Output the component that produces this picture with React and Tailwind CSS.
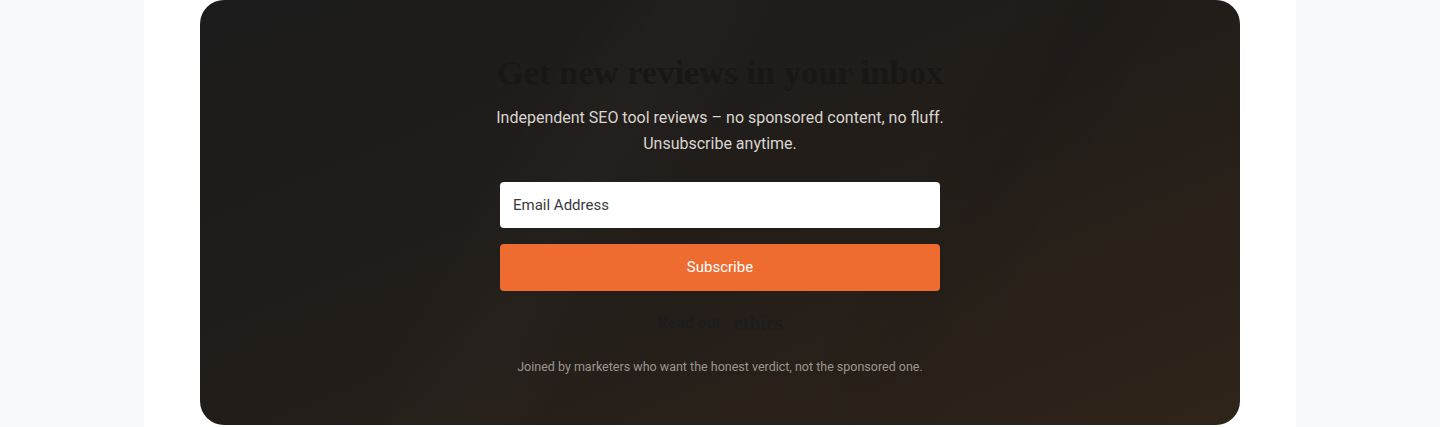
export default function App() {
  return (
    <div className="w-full h-[427px] bg-[#f8f9fb] flex justify-center overflow-hidden" style={{ fontFamily: "Roboto, 'Liberation Sans', sans-serif" }}>
      <div className="w-[1152px] h-full bg-white flex justify-center">
        <section className="relative w-[1040px] h-[425px] rounded-3xl overflow-hidden bg-gradient-to-br from-[#1b1b1b] via-[#221d19] to-[#2f2419]">
          {/* faint diagonal bands */}
          <div className="absolute inset-0 bg-[linear-gradient(120deg,transparent_30%,rgba(255,255,255,0.015)_38%,transparent_46%,transparent_62%,rgba(0,0,0,0.06)_70%,transparent_78%)]" />
          <div className="relative flex flex-col items-center pt-[50px]">
            <h2 className="text-[34.5px] leading-[44px] font-bold text-[#191715] font-['Liberation_Serif',serif]">
              Get new reviews in your inbox
            </h2>
            <p className="mt-[11px] text-[16px] leading-[26px] text-[#d9d5d0] text-center">
              Independent SEO tool reviews – no sponsored content, no fluff.
              <br />
              Unsubscribe anytime.
            </p>
            <form className="mt-[25px] w-[440px] flex flex-col gap-4" onSubmit={(e) => e.preventDefault()}>
              <input
                type="email"
                placeholder="Email Address"
                className="h-[46px] w-full rounded bg-white px-[13px] text-[15px] text-[#333] placeholder:text-[#3a3a3a] outline-none"
              />
              <button type="submit" className="h-[47px] w-full rounded bg-[#ee6c2f] text-[15px] text-white">
                Subscribe
              </button>
            </form>
            <div className="mt-[17px] flex items-center gap-3 text-[16px] font-bold text-[#1e1c1c]">
              <span>Read our</span>
              <span className="font-['Liberation_Serif',serif] text-[20px]">ethics</span>
            </div>
            <p className="mt-[20px] text-[12.5px] text-[#9c9590]">
              Joined by marketers who want the honest verdict, not the sponsored one.
            </p>
          </div>
        </section>
      </div>
    </div>
  );
}
